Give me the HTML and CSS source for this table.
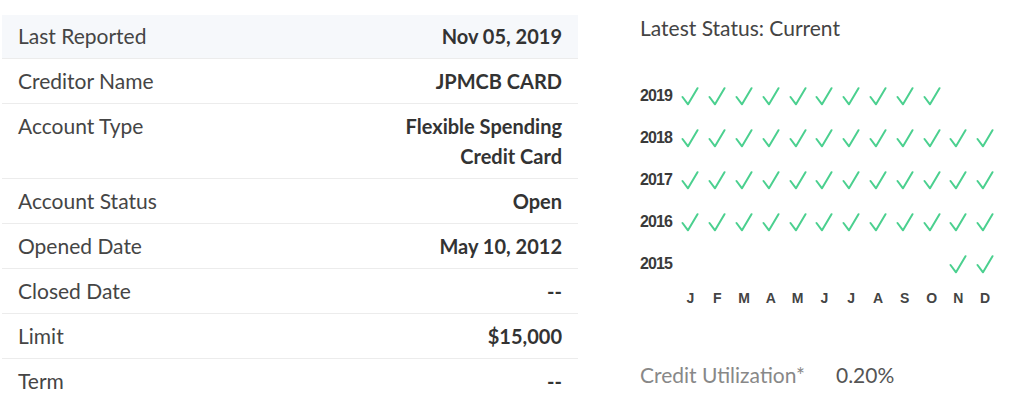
FILE: index.html
```html
<!DOCTYPE html>
<html>
<head>
<meta charset="utf-8">
<link rel="stylesheet" href="styles.css">
</head>
<body>
<div class="page">
  <div class="details">
    <div class="row shaded"><span class="label">Last Reported</span><span class="value">Nov 05, 2019</span></div>
    <div class="row"><span class="label">Creditor Name</span><span class="value">JPMCB CARD</span></div>
    <div class="row"><span class="label">Account Type</span><span class="value">Flexible Spending<br>Credit Card</span></div>
    <div class="row"><span class="label">Account Status</span><span class="value">Open</span></div>
    <div class="row"><span class="label">Opened Date</span><span class="value">May 10, 2012</span></div>
    <div class="row"><span class="label">Closed Date</span><span class="value">--</span></div>
    <div class="row"><span class="label">Limit</span><span class="value">$15,000</span></div>
    <div class="row last"><span class="label">Term</span><span class="value">--</span></div>
  </div>
  <div class="status">
    <div class="status-title">Latest Status: Current</div>
    <div class="history" id="history"></div>
    <div class="util"><span class="util-label">Credit Utilization*</span><span class="util-value">0.20%</span></div>
  </div>
</div>
<script src="app.js"></script>
</body>
</html>
```
FILE: app.js
```js
(function () {
  var rows = [
    ["2019", 0, 10],
    ["2018", 0, 12],
    ["2017", 0, 12],
    ["2016", 0, 12],
    ["2015", 10, 12]
  ];
  var check = '<svg class="check" width="18" height="19" viewBox="0 0 18 19"><path d="M1.5 10 L7 17.3 L16.5 1.2" fill="none" stroke="#4bd08f" stroke-width="2" stroke-linecap="round" stroke-linejoin="round"/></svg>';
  var h = document.getElementById("history");
  var html = "";
  rows.forEach(function (r) {
    html += '<div class="year">' + r[0] + '</div>';
    for (var m = 0; m < 12; m++) {
      html += '<div class="cell">' + (m >= r[1] && m < r[2] ? check : "") + '</div>';
    }
  });
  html += '<div class="year blank"></div>';
  "JFMAMJJASOND".split("").forEach(function (c) {
    html += '<div class="month">' + c + '</div>';
  });
  h.innerHTML = html;
})();
```
FILE: styles.css
```css
html, body {
  margin: 0;
  padding: 0;
  background: #ffffff;
}

body {
  font-family: Lato, "Open Sans", sans-serif;
  color: #444444;
}

.page {
  display: flex;
  align-items: flex-start;
}

.details {
  width: 576px;
  margin-left: 2px;
  padding-top: 15px;
}

.row {
  display: flex;
  justify-content: space-between;
  align-items: flex-start;
  padding: 7px 16px 7px 16px;
  border-bottom: 1px solid #ececec;
  font-size: 20px;
  line-height: 30px;
}

.row.shaded {
  background: #f6f8fb;
  padding-top: 6px;
}

.row.last {
  border-bottom: none;
}

.label {
  color: #454545;
  font-size: 21px;
}

.value {
  font-weight: 700;
  color: #333333;
  text-align: right;
}

.status {
  margin-left: 62px;
  padding-top: 15px;
  width: 370px;
}

.status-title {
  font-size: 21px;
  line-height: 26px;
  color: #444444;
}

.history {
  margin-top: 34px;
  display: grid;
  grid-template-columns: 37px repeat(12, 26.8px);
  grid-auto-rows: 42px;
}

.year {
  font-family: "Liberation Sans", Arial, sans-serif;
  font-weight: 700;
  font-size: 16px;
  letter-spacing: -0.9px;
  color: #3a3a3a;
  display: flex;
  align-items: center;
}

.year.blank {
  height: 26px;
}

.cell {
  display: flex;
  align-items: center;
  justify-content: center;
}

.check {
  display: block;
}

.month {
  font-family: "Liberation Sans", Arial, sans-serif;
  font-weight: 700;
  font-size: 14px;
  color: #444444;
  display: flex;
  align-items: center;
  justify-content: center;
  height: 26px;
  align-self: start;
}

.util {
  margin-top: 35px;
  font-size: 21px;
  line-height: 26px;
}

.util-label {
  color: #888888;
}

.util-value {
  color: #555555;
  margin-left: 31px;
}
```
